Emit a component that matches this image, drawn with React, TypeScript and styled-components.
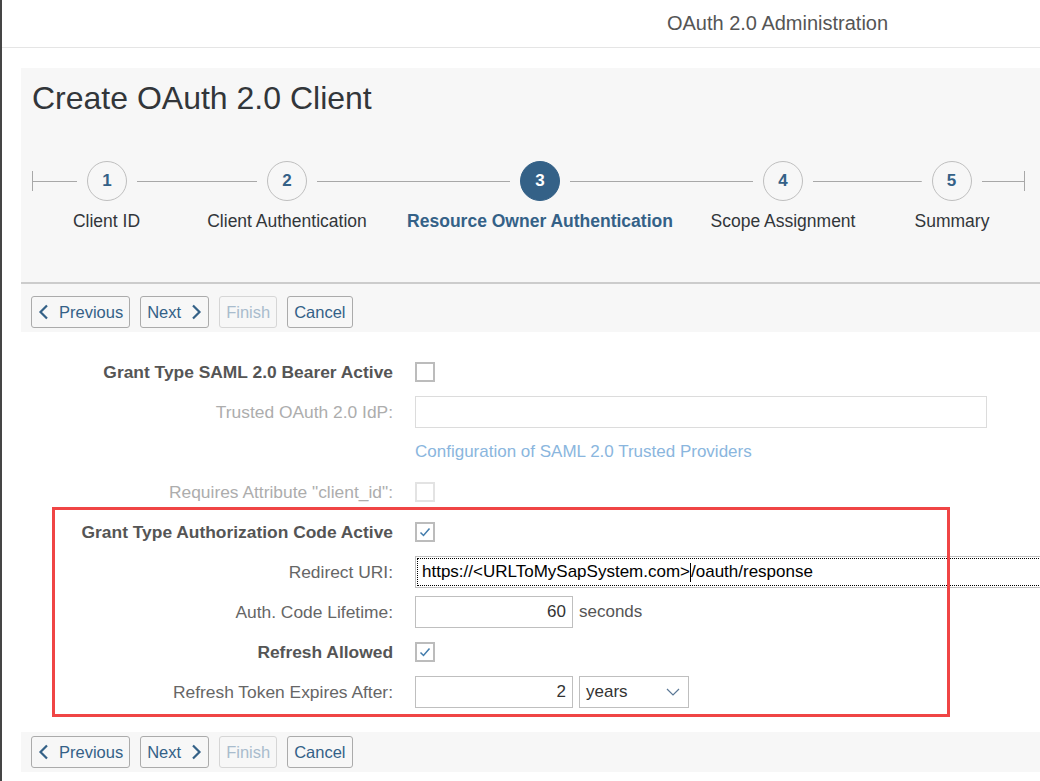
import React from "react";
import styled, { createGlobalStyle } from "styled-components";

const GlobalStyle = createGlobalStyle`
  html, body {
    margin: 0;
    padding: 0;
    background: #fff;
    overflow: hidden;
  }
  body {
    font-family: "Liberation Sans", Arial, sans-serif;
    color: #32363a;
  }
`;

const steps = [
  { n: 1, label: "Client ID" },
  { n: 2, label: "Client Authentication" },
  { n: 3, label: "Resource Owner Authentication" },
  { n: 4, label: "Scope Assignment" },
  { n: 5, label: "Summary" },
];
const ACTIVE = 3;

const ChevronLeft = () => (
  <svg width="11" height="16" viewBox="0 0 11 16">
    <path d="M9 1.5 L2.5 8 L9 14.5" fill="none" stroke="#346187" strokeWidth="2.2" />
  </svg>
);

const ChevronRight = () => (
  <svg width="11" height="16" viewBox="0 0 11 16">
    <path d="M2 1.5 L8.5 8 L2 14.5" fill="none" stroke="#346187" strokeWidth="2.2" />
  </svg>
);

const ChevronDown = () => (
  <svg width="14" height="8" viewBox="0 0 14 8">
    <path d="M1 1 L7 7 L13 1" fill="none" stroke="#5b7896" strokeWidth="1.2" />
  </svg>
);

const Check = () => (
  <svg width="12" height="10" viewBox="0 0 12 10">
    <path d="M1.5 5.5 L4.5 8.5 L10.5 1.5" fill="none" stroke="#427cac" strokeWidth="1.5" />
  </svg>
);

const Toolbar: React.FC<{ top?: boolean }> = ({ top }) => (
  <ButtonBar $top={top}>
    <Button>
      <ChevronLeft />
      Previous
    </Button>
    <Button>
      Next
      <ChevronRight />
    </Button>
    <Button $disabled>Finish</Button>
    <Button>Cancel</Button>
  </ButtonBar>
);

const App: React.FC = () => {
  return (
    <Page>
      <GlobalStyle />
      <Header>
        <span />
        <HeaderTitle>OAuth 2.0 Administration</HeaderTitle>
      </Header>
      <Content>
        <WizardPanel>
          <Title>Create OAuth 2.0 Client</Title>
          <Steps>
            {steps.map((s, i) => (
              <Step key={s.n}>
                <Track>
                  <Segment $edge={i === 0 ? "start" : undefined} />
                  <Circle $active={s.n === ACTIVE}>{s.n}</Circle>
                  <Segment $edge={i === steps.length - 1 ? "end" : undefined} />
                </Track>
                <StepLabel $active={s.n === ACTIVE}>{s.label}</StepLabel>
              </Step>
            ))}
          </Steps>
        </WizardPanel>

        <Toolbar top />

        <Form>
          <Row>
            <Label $variant="bold">Grant Type SAML 2.0 Bearer Active</Label>
            <Control>
              <CheckBox />
            </Control>
          </Row>
          <Row>
            <Label $variant="disabled">Trusted OAuth 2.0 IdP:</Label>
            <Control>
              <Field $width={572} $disabled />
            </Control>
          </Row>
          <Row>
            <span />
            <Control>
              <LinkText>Configuration of SAML 2.0 Trusted Providers</LinkText>
            </Control>
          </Row>
          <Row>
            <Label $variant="disabled">Requires Attribute "client_id":</Label>
            <Control>
              <CheckBox $disabled />
            </Control>
          </Row>

          <Highlight>
            <Row>
              <Label $variant="bold">Grant Type Authorization Code Active</Label>
              <Control>
                <CheckBox>
                  <Check />
                </CheckBox>
              </Control>
            </Row>
            <Row>
              <Label>Redirect URI:</Label>
              <Control>
                <Field $width={680} $focused>
                  https://&lt;URLToMySapSystem.com&gt;
                  <Caret />
                  /oauth/response
                </Field>
              </Control>
            </Row>
            <Row>
              <Label>Auth. Code Lifetime:</Label>
              <Control>
                <Field $width={158} $right>
                  60
                </Field>
                <Unit>seconds</Unit>
              </Control>
            </Row>
            <Row>
              <Label $variant="bold">Refresh Allowed</Label>
              <Control>
                <CheckBox>
                  <Check />
                </CheckBox>
              </Control>
            </Row>
            <Row>
              <Label>Refresh Token Expires After:</Label>
              <Control>
                <Field $width={158} $right>
                  2
                </Field>
                <Select>
                  years
                  <ChevronDown />
                </Select>
              </Control>
            </Row>
          </Highlight>
        </Form>

        <Toolbar />
      </Content>
    </Page>
  );
};

export default App;

const Page = styled.div`
  min-height: 100vh;
  border-left: 2px solid #454545;
  box-sizing: border-box;
`;

const Header = styled.header`
  height: 47px;
  border-bottom: 1px solid #e5e5e5;
  display: grid;
  grid-template-columns: 513px 1fr;
  align-items: center;
`;

const HeaderTitle = styled.div`
  text-align: center;
  font-size: 20px;
  line-height: 24px;
  color: #555;
  padding-bottom: 2px;
`;

const Content = styled.main`
  padding: 20px 0 0 19px;
`;

const WizardPanel = styled.section`
  background: #f7f7f7;
  border-bottom: 2px solid #cccccc;
  padding: 11px 0 51px 11px;
`;

const Title = styled.h1`
  margin: 0 0 44px;
  font-size: 32px;
  line-height: 38px;
  font-weight: normal;
  color: #32363a;
`;

const Steps = styled.div`
  display: grid;
  grid-template-columns: 149px 212px 294px 192px 146px;
`;

const Step = styled.div`
  display: flex;
  flex-direction: column;
  align-items: center;
`;

const Track = styled.div`
  width: 100%;
  display: flex;
  align-items: center;
`;

const Segment = styled.div<{ $edge?: "start" | "end" }>`
  flex: 1;
  height: 20px;
  background: linear-gradient(#a8a8a8, #a8a8a8) center / 100% 1px no-repeat;
  border-left: ${(p) => (p.$edge === "start" ? "1px solid #a8a8a8" : "none")};
  border-right: ${(p) => (p.$edge === "end" ? "1px solid #a8a8a8" : "none")};
`;

const Circle = styled.div<{ $active?: boolean }>`
  width: 40px;
  height: 40px;
  margin: 0 10px;
  box-sizing: border-box;
  border-radius: 50%;
  border: 1px solid ${(p) => (p.$active ? "#346187" : "#bfbfbf")};
  background: ${(p) => (p.$active ? "#346187" : "transparent")};
  color: ${(p) => (p.$active ? "#fff" : "#346187")};
  font-size: 17px;
  font-weight: bold;
  display: flex;
  align-items: center;
  justify-content: center;
`;

const StepLabel = styled.div<{ $active?: boolean }>`
  margin-top: 10px;
  font-size: 17.5px;
  line-height: 20px;
  white-space: nowrap;
  color: ${(p) => (p.$active ? "#346187" : "#32363a")};
  font-weight: ${(p) => (p.$active ? "bold" : "normal")};
`;

const ButtonBar = styled.div<{ $top?: boolean }>`
  background: #f7f7f7;
  display: flex;
  gap: 10px;
  padding: ${(p) => (p.$top ? "12px 0 4px 10px" : "4px 0 4px 10px")};
`;

const Button = styled.button<{ $disabled?: boolean }>`
  height: 32px;
  box-sizing: border-box;
  padding: 0 6px;
  display: inline-flex;
  align-items: center;
  gap: 10px;
  background: transparent;
  border: 1px solid ${(p) => (p.$disabled ? "#d6d6d6" : "#ababab")};
  border-radius: 3px;
  font-family: inherit;
  font-size: 16.5px;
  color: ${(p) => (p.$disabled ? "#a9bccd" : "#346187")};
`;

const Form = styled.form`
  padding: 20px 0;
  background: #fff;
`;

const Row = styled.div`
  height: 40px;
  display: grid;
  grid-template-columns: 372px 1fr;
  column-gap: 22px;
  align-items: center;
`;

const Label = styled.label<{ $variant?: "bold" | "disabled" }>`
  text-align: right;
  font-size: 17.4px;
  white-space: nowrap;
  font-weight: ${(p) => (p.$variant === "bold" ? "bold" : "normal")};
  color: ${(p) =>
    p.$variant === "bold" ? "#555" : p.$variant === "disabled" ? "#adadad" : "#666"};
`;

const Control = styled.div`
  display: flex;
  align-items: center;
  gap: 6px;
  min-width: 0;
`;

const CheckBox = styled.div<{ $disabled?: boolean }>`
  width: 20px;
  height: 20px;
  box-sizing: border-box;
  border: 2px solid ${(p) => (p.$disabled ? "#e3e3e3" : "#bcbcbc")};
  background: #fff;
  display: flex;
  align-items: center;
  justify-content: center;
`;

const Field = styled.div<{
  $width: number;
  $right?: boolean;
  $focused?: boolean;
  $disabled?: boolean;
}>`
  flex: none;
  width: ${(p) => p.$width}px;
  height: 32px;
  box-sizing: border-box;
  border: 1px solid ${(p) => (p.$disabled ? "#dcdcdc" : "#bfbfbf")};
  outline: ${(p) => (p.$focused ? "1px dotted #000" : "none")};
  outline-offset: -3px;
  background: #fff;
  padding: 0 6px;
  display: flex;
  align-items: center;
  justify-content: ${(p) => (p.$right ? "flex-end" : "flex-start")};
  font-size: 17px;
  color: ${(p) => (p.$focused ? "#000" : "#333")};
  white-space: nowrap;
`;

const Caret = styled.span`
  display: inline-block;
  width: 1px;
  height: 19px;
  background: #000;
`;

const Unit = styled.span`
  font-size: 17px;
  color: #555;
`;

const Select = styled.div`
  width: 110px;
  height: 32px;
  box-sizing: border-box;
  border: 1px solid #bfbfbf;
  background: #fff;
  padding: 0 8px 0 6px;
  display: flex;
  align-items: center;
  justify-content: space-between;
  font-size: 17px;
  color: #333;
`;

const LinkText = styled.a`
  font-size: 17px;
  color: #8ab6de;
`;

const Highlight = styled.div`
  position: relative;

  &::after {
    content: "";
    position: absolute;
    top: -5px;
    bottom: -5px;
    left: 31px;
    width: 898px;
    border: 3px solid #f04545;
    box-sizing: border-box;
    pointer-events: none;
  }
`;
